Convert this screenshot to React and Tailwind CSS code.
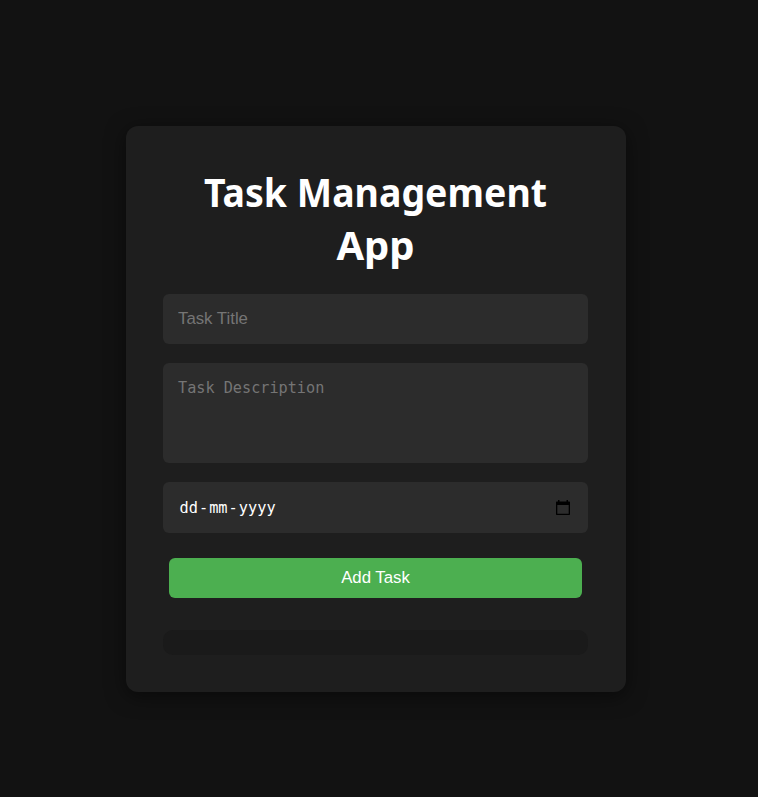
export default function App() {
  return (
    <main className="flex h-[797px] flex-col items-center bg-[#121212] pt-[126px] pr-[6px] font-['Noto_Sans',sans-serif]">
      <section className="h-[566px] w-[500px] rounded-xl bg-[#1e1e1e] pt-[39px] pr-[38px] pl-[37px] shadow-[0_4px_20px_rgba(0,0,0,0.5)]">
        <h1 className="text-center text-[40px] leading-[53px] font-bold text-white">
          <span className="block scale-x-[0.937] whitespace-nowrap">Task Management</span>
          <span className="block">App</span>
        </h1>
        <form className="mt-[23px] flex flex-col">
          <input placeholder="Task Title" className="h-[50px] rounded-md bg-[#2c2c2c] px-[15px] font-['Liberation_Sans',sans-serif] text-[16.8px] placeholder:text-[#757575] outline-none" />
          <textarea placeholder="Task Description" className="mt-[19px] h-[100px] resize-none rounded-md bg-[#2c2c2c] px-[15px] pt-[16px] font-['DejaVu_Sans_Mono',monospace] text-[15.2px] leading-[19px] placeholder:text-[#757575] outline-none" />
          <div className="mt-[19px] flex h-[51px] items-center justify-between rounded-md bg-[#2c2c2c] pr-[18px] pl-[15px] font-['DejaVu_Sans_Mono',monospace] text-[15.3px] text-white">
            <span className="flex pt-[2px] pl-[0.5px]">
              <span className="px-px">dd</span>
              <span>-</span>
              <span className="px-px">mm</span>
              <span>-</span>
              <span className="px-px">yyyy</span>
            </span>
            <svg className="mb-px" width="14" height="15" viewBox="0 0 14 15" fill="#000">
              <path fillRule="evenodd" d="M2 0h1.500v1.500h7V0H12v1.500h1.300q.7 0 .7.7v12.100q0 .7-.7.7H.7q-.7 0-.7-.7V2.200q0-.7.7-.7H2ZM1.300 5v8.700h11.400V5Z" />
            </svg>
          </div>
          <button type="button" className="mx-[6px] mt-[25px] h-[40px] rounded-md bg-[#4caf50] font-['Liberation_Sans',sans-serif] text-[16.8px] text-white">Add Task</button>
        </form>
        <div className="mt-[32px] h-[25px] rounded-[10px] bg-[#1a1a1a]" />
      </section>
    </main>
  );
}
